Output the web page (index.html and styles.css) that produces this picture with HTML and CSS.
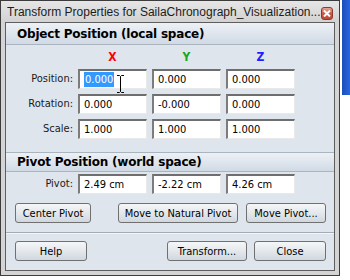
FILE: index.html
```html
<!DOCTYPE html>
<html lang="en">
<head>
    <meta charset="UTF-8">
    <title>Transform Properties</title>
    <link rel="stylesheet" href="styles.css">
</head>
<body>
    <div class="screen">
        <div class="window">
            <div class="titlebar">
                <span class="title">Transform Properties for SailaChronograph_Visualization...</span>
                <span class="close-btn">
                    <svg width="8" height="7" viewBox="0 0 8 7"><path d="M1 0.5 L7 6.5 M7 0.5 L1 6.5" stroke="#fff" stroke-width="2"/></svg>
                </span>
            </div>
            <div class="panel">
                <div class="section-head">Object Position (local space)</div>
                <div class="fields axes">
                    <span></span>
                    <span class="axis axis-x">X</span>
                    <span class="axis axis-y">Y</span>
                    <span class="axis axis-z">Z</span>
                </div>
                <div class="fields">
                    <label>Position:</label>
                    <div class="field">
                        <span class="selected">0.000</span>
                        <svg class="ibeam" width="7" height="18" viewBox="0 0 7 18"><path d="M0 0.5 H2.5 L3.5 1.5 L4.5 0.5 H7 M3.5 1.5 V16.5 M0 17.5 H2.5 L3.5 16.5 L4.5 17.5 H7" stroke="#000" fill="none"/></svg>
                    </div>
                    <div class="field">0.000</div>
                    <div class="field">0.000</div>

                    <label>Rotation:</label>
                    <div class="field">0.000</div>
                    <div class="field">-0.000</div>
                    <div class="field">0.000</div>

                    <label>Scale:</label>
                    <div class="field">1.000</div>
                    <div class="field">1.000</div>
                    <div class="field">1.000</div>
                </div>

                <div class="section-head pivot-head">Pivot Position (world space)</div>
                <div class="fields pivot-row">
                    <label>Pivot:</label>
                    <div class="field">2.49 cm</div>
                    <div class="field">-2.22 cm</div>
                    <div class="field">4.26 cm</div>
                </div>
                <div class="button-row">
                    <button class="btn btn-center">Center Pivot</button>
                    <button class="btn btn-natural">Move to Natural Pivot</button>
                    <button class="btn btn-move">Move Pivot...</button>
                </div>
                <div class="separator"></div>
                <div class="button-row bottom-row">
                    <button class="btn btn-help">Help</button>
                    <button class="btn btn-transform">Transform...</button>
                    <button class="btn btn-close">Close</button>
                </div>
            </div>
        </div>
        <div class="desktop-strip"></div>
    </div>
</body>
</html>
```

FILE: styles.css
```css
body {
    margin: 0;
    background: #fff;
    font-family: "DejaVu Sans Condensed", "DejaVu Sans", sans-serif;
    font-size: 11px;
    color: #000;
}
.screen {
    display: flex;
    align-items: flex-start;
    gap: 2px;
}
.window {
    width: 340px;
    box-sizing: border-box;
    border: 1px solid #3c3c3c;
    background: #d4d4d4;
    padding: 0 4px 4px;
}
.titlebar {
    height: 21px;
    margin: 0 -4px;
    padding: 0 6px;
    display: flex;
    align-items: center;
    justify-content: space-between;
    background: linear-gradient(#e6e6e6, #d2d2d2);
}
.title {
    font-family: "Liberation Sans", Arial, sans-serif;
    font-size: 12px;
    color: #1c1c1c;
    white-space: nowrap;
}
.close-btn {
    width: 14px;
    height: 13px;
    box-sizing: border-box;
    margin-top: 4px;
    border: 1px solid #8a3a30;
    border-radius: 3px;
    background: linear-gradient(#e8a496, #c95a44 50%, #c04a34);
    display: flex;
    align-items: center;
    justify-content: center;
}
.panel {
    border: 1px solid #5e5e5e;
    background: #dfe5ec;
    padding-bottom: 9px;
}
.section-head {
    height: 21px;
    line-height: 22px;
    border-bottom: 1px solid #a9b4bf;
    padding-left: 11px;
    font-family: "DejaVu Sans", sans-serif;
    font-size: 12px;
    font-weight: bold;
    letter-spacing: -0.2px;
    background: linear-gradient(#edf1f6, #d0dae5);
}
.pivot-head {
    margin-top: 13px;
    height: 18px;
    line-height: 19px;
    border-top: 1px solid #a9b4bf;
}
.fields {
    display: grid;
    grid-template-columns: 67px 69px 69px 69px;
    grid-auto-rows: 20px;
    column-gap: 5px;
    row-gap: 5px;
}
.fields label {
    text-align: right;
    line-height: 20px;
    color: #1a1a1a;
}
.axes {
    grid-auto-rows: 24px;
}
.axis {
    text-align: center;
    line-height: 24px;
    font-weight: bold;
    font-size: 12px;
}
.axis-x { color: #f00; }
.axis-y { color: #18a818; }
.axis-z { color: #1f1fff; }
.pivot-row {
    margin-top: 2px;
}
.field {
    position: relative;
    box-sizing: border-box;
    background: #fff;
    border-top: 2px solid #6e6e6e;
    border-left: 2px solid #7c7c7c;
    border-right: 1px solid #e9e9e9;
    border-bottom: 1px solid #e9e9e9;
    padding-left: 4px;
    line-height: 17px;
    white-space: nowrap;
}
.selected {
    background: #3399ff;
    color: #fff;
    padding: 1px 1px;
}
.ibeam {
    position: absolute;
    left: 37px;
    top: 4px;
}
.button-row {
    display: flex;
    margin-top: 9px;
    padding-left: 9px;
}
.btn {
    height: 20px;
    box-sizing: border-box;
    border: 1px solid #707070;
    border-radius: 3px;
    background: linear-gradient(#f5f6f7, #e4e8ec 50%, #cfd7df);
    font-family: inherit;
    font-size: 11px;
    color: #000;
    padding: 0;
}
.btn-center { width: 76px; }
.btn-natural { width: 120px; margin-left: 27px; }
.btn-move { width: 80px; margin-left: 8px; }
.separator {
    margin-top: 9px;
    border-top: 1px solid #a3abb4;
    border-bottom: 1px solid #f4f6f9;
}
.bottom-row {
    margin-top: 7px;
}
.btn-help { width: 72px; }
.btn-transform { width: 80px; margin-left: 80px; }
.btn-close { width: 72px; margin-left: 7px; }
.desktop-strip {
    width: 8px;
    height: 95px;
    background: linear-gradient(90deg, #1b4fb8, #2866e0);
}
```
